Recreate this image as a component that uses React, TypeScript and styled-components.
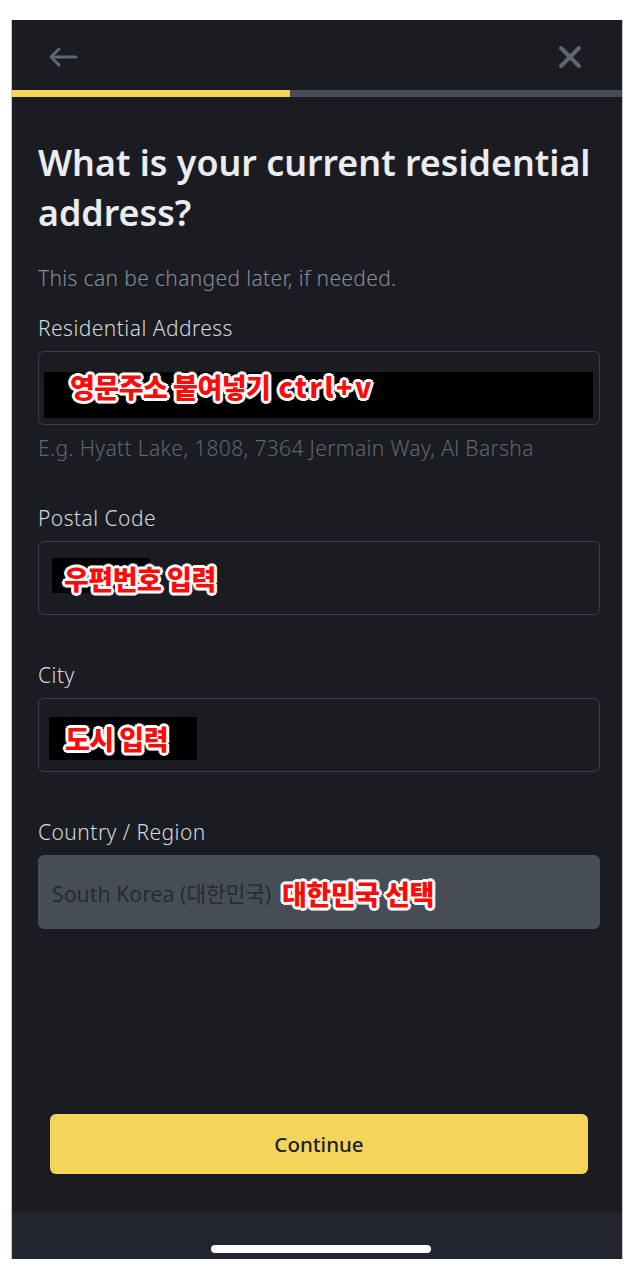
import React from "react";
import styled, { createGlobalStyle } from "styled-components";

const GlobalStyle = createGlobalStyle`
  html, body {
    margin: 0;
    padding: 0;
    background: #ffffff;
  }
  * {
    box-sizing: border-box;
  }
`;

const Page = styled.div`
  width: 644px;
  height: 1273px;
  padding: 20px 21px 14px 11px;
`;

const Phone = styled.div`
  width: 612px;
  height: 1239px;
  background: #1b1c21;
  display: flex;
  flex-direction: column;
  font-family: "Noto Sans", "Noto Sans CJK KR", sans-serif;
  border-left: 1px solid #c8c8c8;
  border-right: 1px solid #c8c8c8;
`;

const Header = styled.div`
  height: 70px;
  display: flex;
  align-items: center;
  justify-content: space-between;
  padding: 4px 40px 0 36px;
`;

const IconButton = styled.button`
  background: none;
  border: none;
  padding: 0;
  display: flex;
  align-items: center;
  cursor: pointer;
`;

const Progress = styled.div`
  height: 7px;
  background: #474d57;
`;

const ProgressFill = styled.div`
  height: 100%;
  background: #f4d45b;
`;

const Content = styled.div`
  flex: 1;
  padding: 40px 22px 0 26px;
  display: flex;
  flex-direction: column;
`;

const Title = styled.h1`
  margin: 0;
  font-size: 35.8px;
  line-height: 50px;
  font-weight: 600;
  color: #eaecef;
`;

const Subtitle = styled.p`
  margin: 28px 0 0;
  font-size: 21px;
  line-height: 26px;
  letter-spacing: 0.35px;
  color: #848e9c;
  font-weight: 300;
`;

const Form = styled.div`
  margin-top: 24px;
  display: flex;
  flex-direction: column;
  gap: 47px;
`;

const Field = styled.div`
  display: flex;
  flex-direction: column;
`;

const Label = styled.label`
  font-size: 21px;
  line-height: 26px;
  letter-spacing: 0.45px;
  color: #d5d8dc;
  font-weight: 300;
`;

const InputBox = styled.div<{ $filled?: boolean }>`
  position: relative;
  margin-top: 10px;
  height: 74px;
  border-radius: 6px;
  border: 1px solid ${(p) => (p.$filled ? "#474d57" : "#3a3e46")};
  background: ${(p) => (p.$filled ? "#474d57" : "transparent")};
  display: flex;
  align-items: center;
  padding: 0 13px;
`;

const SelectValue = styled.span`
  font-size: 21.3px;
  color: #262a31;
  font-weight: 400;
`;

const Helper = styled.p`
  margin: 10px 0 -3px;
  font-size: 21px;
  line-height: 26px;
  letter-spacing: 0.35px;
  color: #5e6673;
  font-weight: 300;
`;

const Redaction = styled.div<{ $l: number; $t: number; $w: number; $h: number }>`
  position: absolute;
  left: ${(p) => p.$l}px;
  top: ${(p) => p.$t}px;
  width: ${(p) => p.$w}px;
  height: ${(p) => p.$h}px;
  background: #000000;
`;

const Mark = styled.span<{ $l: number; $t: number }>`
  position: absolute;
  left: ${(p) => p.$l}px;
  top: ${(p) => p.$t}px;
  font-family: "Noto Sans CJK KR", sans-serif;
  font-weight: 900;
  font-size: 27px;
  line-height: 30px;
  letter-spacing: -0.5px;
  color: #ff0a0a;
  white-space: nowrap;
  text-shadow:
    2px 0 0 #fff, -2px 0 0 #fff, 0 2px 0 #fff, 0 -2px 0 #fff,
    2px 2px 0 #fff, -2px -2px 0 #fff, 2px -2px 0 #fff, -2px 2px 0 #fff,
    3px 0 0 #fff, -3px 0 0 #fff, 0 3px 0 #fff, 0 -3px 0 #fff;
`;

const Latin = styled.span`
  letter-spacing: 2.5px;
  margin-left: 8px;
`;

const ButtonArea = styled.div`
  padding: 0 34px 38px 38px;
`;

const ContinueButton = styled.button`
  width: 100%;
  height: 60px;
  border: none;
  border-radius: 6px;
  background: #f4d45b;
  color: #1e2026;
  font-family: "Noto Sans", sans-serif;
  font-size: 20.5px;
  font-weight: 500;
  cursor: pointer;
`;

const HomeBar = styled.div`
  height: 47px;
  background: #22252e;
  display: flex;
  align-items: flex-end;
  justify-content: center;
  padding-bottom: 6px;
`;

const HomeIndicator = styled.div`
  width: 220px;
  height: 8px;
  border-radius: 4px;
  background: #ffffff;
  margin-left: 8px;
`;

const BackIcon = () => (
  <svg width="30" height="22" viewBox="0 0 30 22" fill="none">
    <path
      d="M28 11H3M11 3L3 11L11 19"
      stroke="#5e6673"
      strokeWidth="3"
      strokeLinecap="round"
      strokeLinejoin="round"
    />
  </svg>
);

const CloseIcon = () => (
  <svg width="24" height="24" viewBox="0 0 24 24" fill="none">
    <path
      d="M3 3L21 21M21 3L3 21"
      stroke="#5e6673"
      strokeWidth="4"
      strokeLinecap="round"
    />
  </svg>
);

const App = () => {
  const progress = 45.6;

  return (
    <>
      <GlobalStyle />
      <Page>
        <Phone>
          <Header>
            <IconButton aria-label="back">
              <BackIcon />
            </IconButton>
            <IconButton aria-label="close">
              <CloseIcon />
            </IconButton>
          </Header>
          <Progress>
            <ProgressFill style={{ width: `${progress}%` }} />
          </Progress>

          <Content>
            <Title>
              What is your current residential
              <br />
              address?
            </Title>
            <Subtitle>This can be changed later, if needed.</Subtitle>

            <Form>
              <Field>
                <Label>Residential Address</Label>
                <InputBox>
                  <Redaction $l={5} $t={20} $w={549} $h={46} />
                  <Mark $l={31} $t={20}>
                    영문주소 붙여넣기<Latin>ctrl+v</Latin>
                  </Mark>
                </InputBox>
                <Helper>E.g. Hyatt Lake, 1808, 7364 Jermain Way, Al Barsha</Helper>
              </Field>

              <Field>
                <Label>Postal Code</Label>
                <InputBox>
                  <Redaction $l={13} $t={16} $w={97} $h={35} />
                  <Mark $l={25} $t={22}>우편번호 입력</Mark>
                </InputBox>
              </Field>

              <Field>
                <Label>City</Label>
                <InputBox>
                  <Redaction $l={10} $t={18} $w={148} $h={43} />
                  <Mark $l={26} $t={25}>도시 입력</Mark>
                </InputBox>
              </Field>

              <Field>
                <Label>Country / Region</Label>
                <InputBox $filled>
                  <SelectValue>South Korea (대한민국)</SelectValue>
                  <Mark $l={243} $t={23}>대한민국 선택</Mark>
                </InputBox>
              </Field>
            </Form>
          </Content>

          <ButtonArea>
            <ContinueButton>Continue</ContinueButton>
          </ButtonArea>
          <HomeBar>
            <HomeIndicator />
          </HomeBar>
        </Phone>
      </Page>
    </>
  );
};

export default App;
